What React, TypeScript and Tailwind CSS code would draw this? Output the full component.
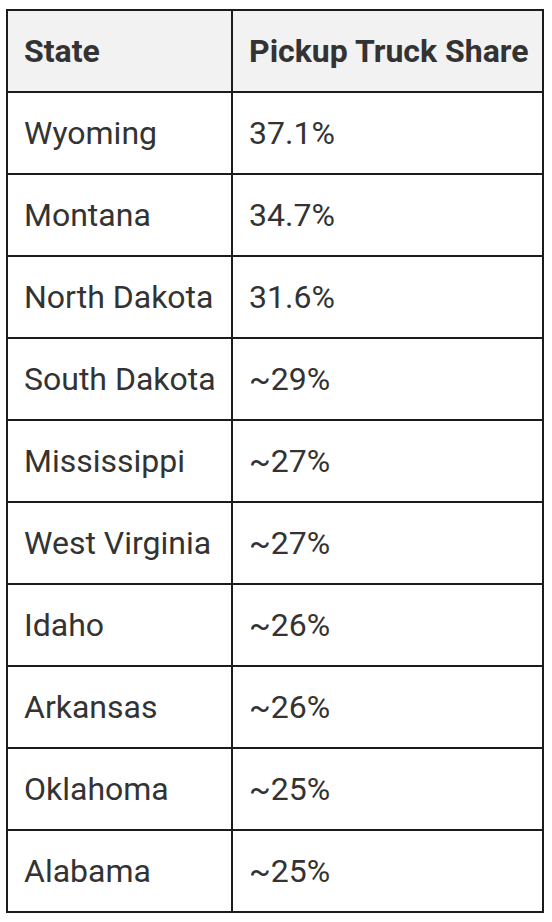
const rows: [string, string][] = [
  ["Wyoming", "37.1%"],
  ["Montana", "34.7%"],
  ["North Dakota", "31.6%"],
  ["South Dakota", "~29%"],
  ["Mississippi", "~27%"],
  ["West Virginia", "~27%"],
  ["Idaho", "~26%"],
  ["Arkansas", "~26%"],
  ["Oklahoma", "~25%"],
  ["Alabama", "~25%"],
];

export default function App() {
  return (
    <div className="bg-white w-[552px] h-[922px] pt-[9px] pl-[6px] font-['Roboto',sans-serif] text-[#333]">
      <table className="border-collapse w-[538px] text-[32px]">
        <thead>
          <tr className="bg-[#f2f2f2] h-[82px]">
            <th className="border-2 border-[#1c1c1c] w-[225px] pl-4 pr-2 text-left font-bold">State</th>
            <th className="border-2 border-[#1c1c1c] pl-4 pr-2 text-left font-bold">Pickup Truck Share</th>
          </tr>
        </thead>
        <tbody>
          {rows.map(([state, share]) => (
            <tr key={state} className="h-[82px]">
              <td className="border-2 border-[#1c1c1c] pl-4 pr-2">{state}</td>
              <td className="border-2 border-[#1c1c1c] pl-4 pr-2">{share}</td>
            </tr>
          ))}
        </tbody>
      </table>
    </div>
  );
}
